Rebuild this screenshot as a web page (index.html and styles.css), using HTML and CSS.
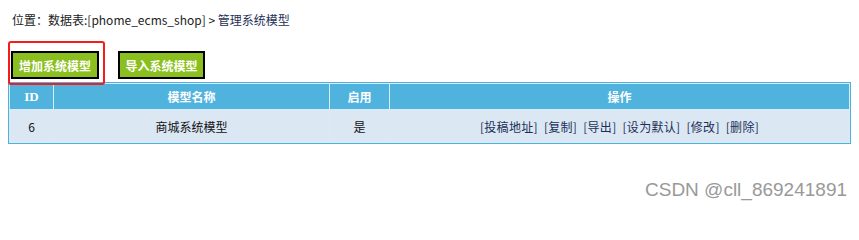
FILE: index.html
```html
<!DOCTYPE html>
<html lang="zh-CN">
<head>
<meta charset="utf-8">
<title>管理系统模型</title>
<link rel="stylesheet" href="styles.css">
</head>
<body>
<div class="crumb">位置：数据表:[phome_ecms_shop] &gt; <a class="crumb-link" href="#">管理系统模型</a></div>
<div class="btn-row">
  <button class="btn">增加系统模型</button>
  <button class="btn">导入系统模型</button>
</div>
<table class="grid">
  <thead>
    <tr>
      <th class="c-id">ID</th>
      <th class="c-name">模型名称</th>
      <th class="c-on">启用</th>
      <th class="c-ops">操作</th>
    </tr>
  </thead>
  <tbody>
    <tr>
      <td>6</td>
      <td>商城系统模型</td>
      <td>是</td>
      <td class="ops"><a href="#">[投稿地址]</a> <a href="#">[复制]</a> <a href="#">[导出]</a> <a href="#">[设为默认]</a> <a href="#">[修改]</a> <a href="#">[删除]</a></td>
    </tr>
  </tbody>
</table>
<div class="mark"></div>
<div class="watermark">CSDN @cll_869241891</div>
</body>
</html>
```
FILE: styles.css
```css
html, body {
  background: #ffffff;
}
body {
  margin: 8px;
  font-family: "Noto Sans CJK SC", "Noto Sans", sans-serif;
  font-size: 12px;
  color: #222222;
}
.crumb {
  height: 24px;
  line-height: 24px;
  padding-left: 4px;
}
.crumb-link {
  color: #1d2f57;
  text-decoration: none;
}
.btn-row {
  display: flex;
  gap: 19px;
  margin: 19px 0 3px 3px;
  height: 28px;
}
.btn {
  height: 28px;
  width: 88px;
  padding: 0;
  background: #8bbf1f;
  border: 2px solid #000000;
  color: #ffffff;
  font-family: "Noto Sans CJK SC", sans-serif;
  font-size: 12px;
  font-weight: bold;
}
.btn + .btn {
  width: 87px;
}
.grid {
  width: 100%;
  border-collapse: separate;
  border-spacing: 1px;
  border: 1px solid #4fb1dc;
  background: #d6ecf8;
}
.grid th {
  background: #50b3de;
  color: #ffffff;
  font-weight: bold;
  height: 25px;
  padding: 0;
  font-size: 12px;
}
.grid th.c-id {
  font-family: "Liberation Serif", serif;
  font-size: 13px;
  width: 43px;
}
.grid th.c-name { width: 275px; }
.grid th.c-on { width: 59px; }
.grid td {
  background: #dbe8f4;
  height: 32px;
  padding: 0;
  text-align: center;
  color: #111111;
}
.ops {
  word-spacing: 3px;
  letter-spacing: 0.3px;
}
.ops a {
  color: #1d2f57;
  text-decoration: none;
}
.mark {
  position: absolute;
  left: 8px;
  top: 41px;
  width: 93px;
  height: 40px;
  border: 2px solid #f51c1c;
  border-radius: 3px;
}
.watermark {
  position: absolute;
  left: 645px;
  top: 180px;
  font-family: "Liberation Sans", sans-serif;
  font-size: 19px;
  line-height: 19px;
  color: #999999;
}
```
